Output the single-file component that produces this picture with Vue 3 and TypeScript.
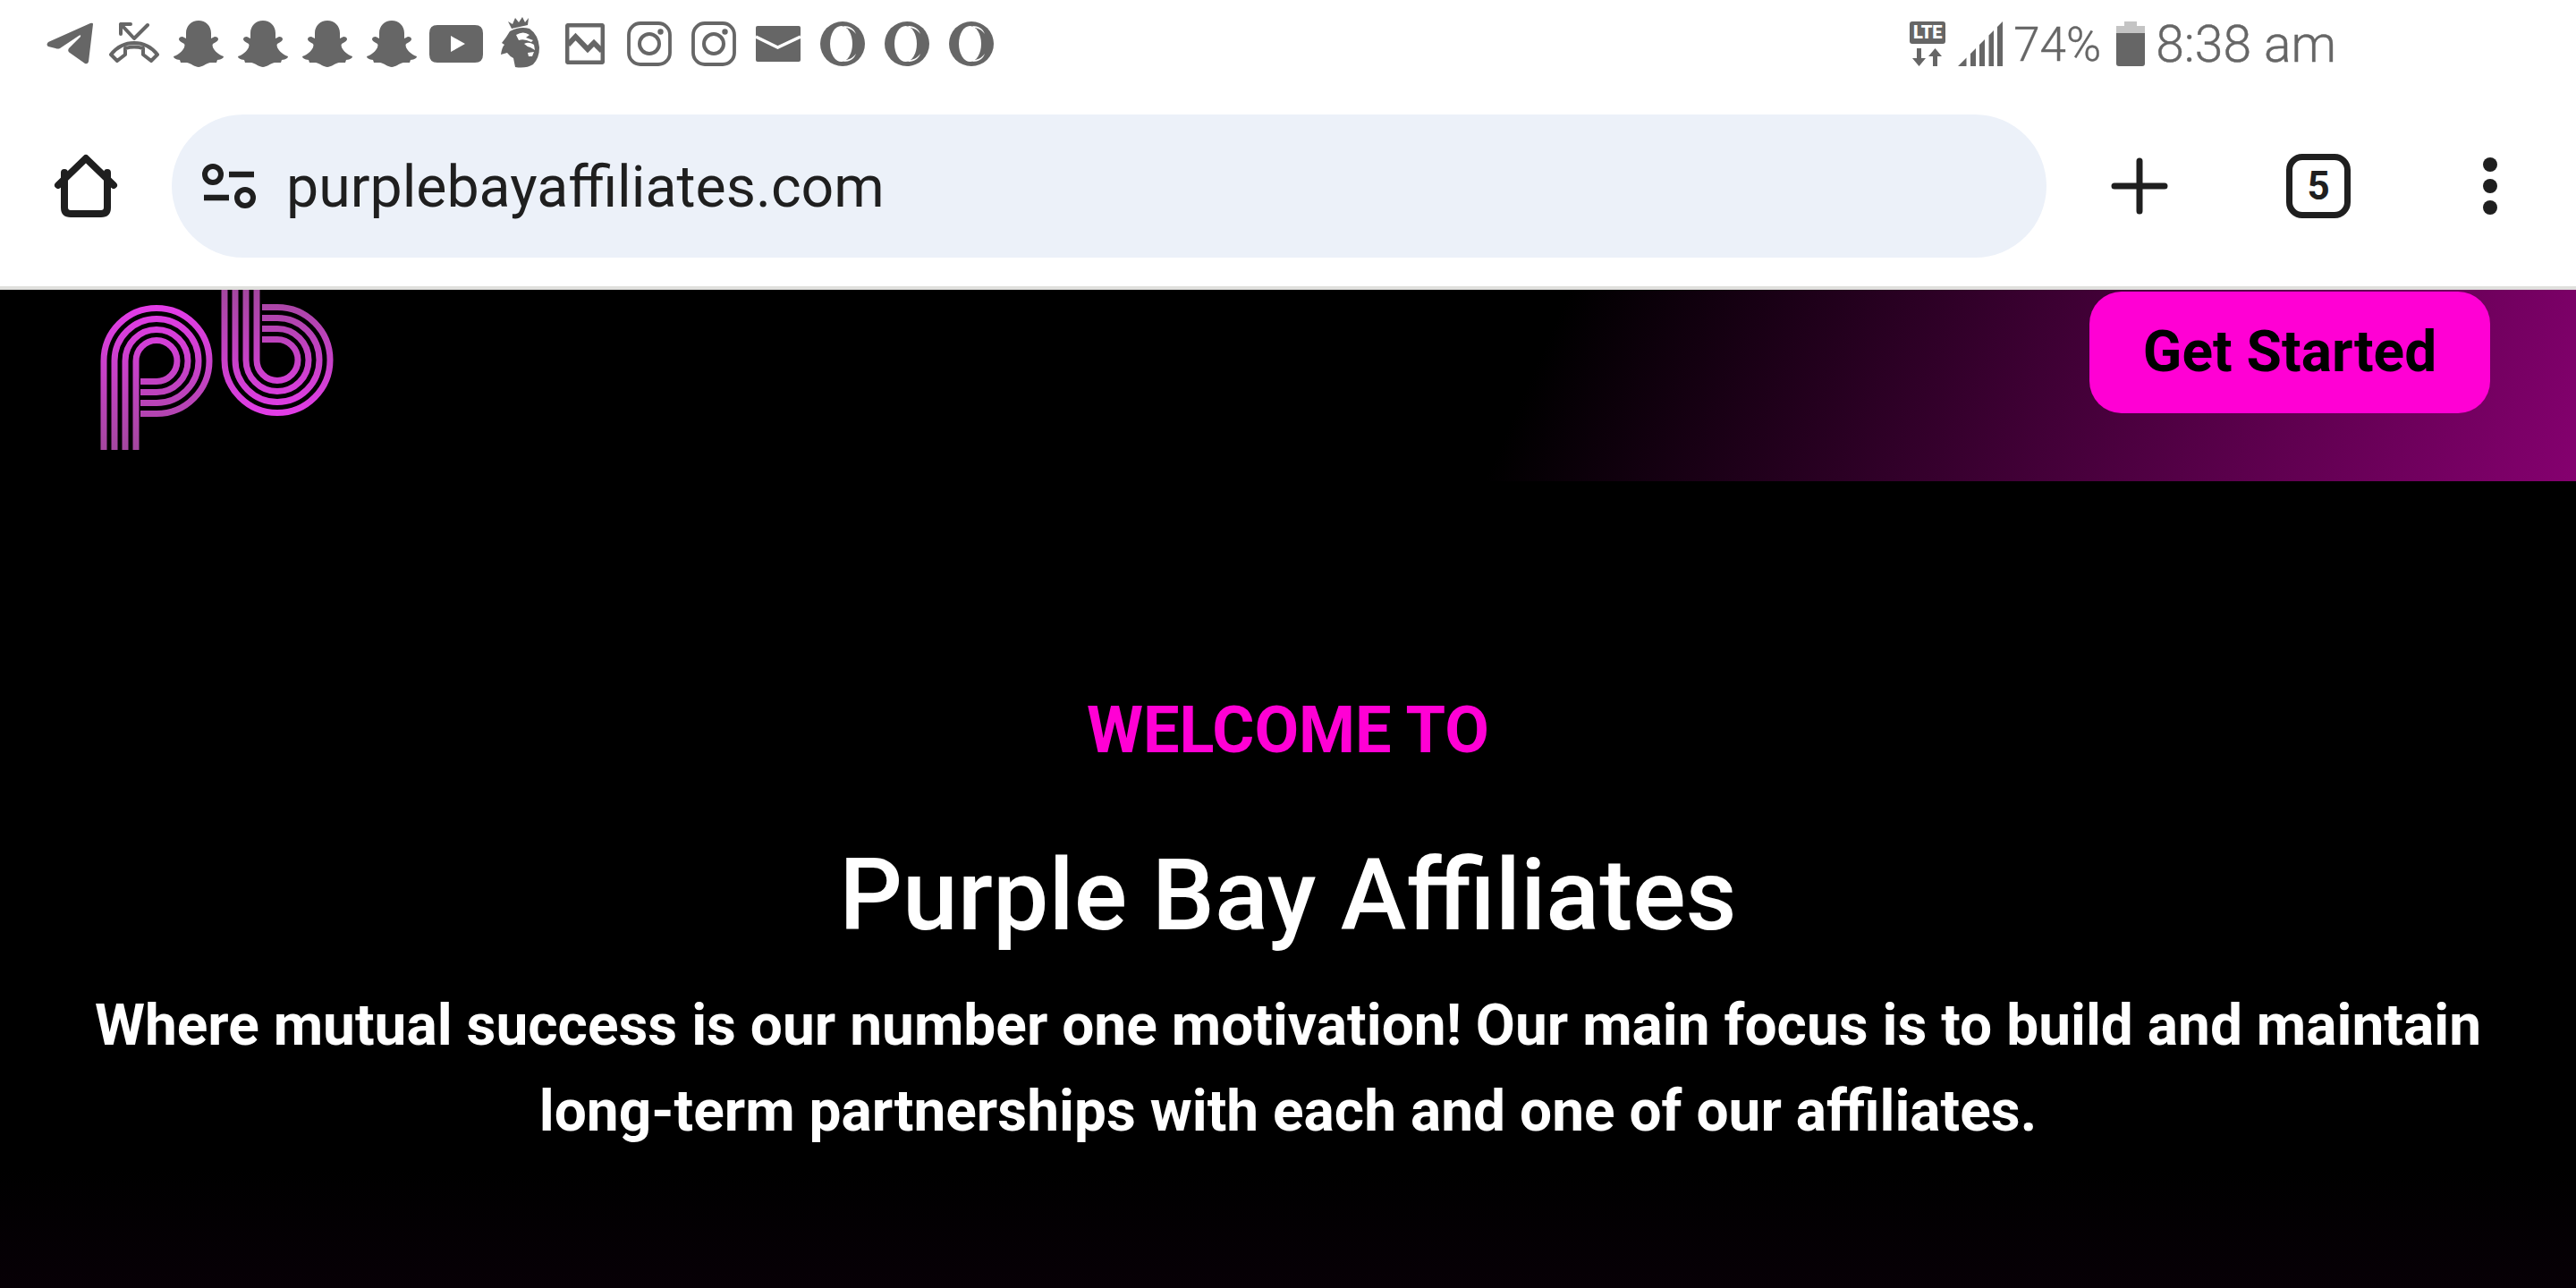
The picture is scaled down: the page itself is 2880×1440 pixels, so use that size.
<template>
  <div class="page">
    <!-- phone status bar -->
    <div class="status-bar">
      <div class="notif-icons">
        <div class="slot">
          <svg width="55" height="48" viewBox="0 0 55 48" fill="#666">
            <path d="M53 2 L48 44 Q47 47 44 46 L27 34 Q24 32 26 29 L39 16 Q40 13 37 15 L16 29 Q14 30 11 29 L3 27 Q0 25 3 22 L50 1 Q53 0 53 2Z" />
          </svg>
        </div>
        <div class="slot">
          <svg width="56" height="48" viewBox="0 0 56 48" fill="none" stroke="#666" stroke-width="4" stroke-linecap="round" stroke-linejoin="round">
            <path d="M13 13 V2 H24 M13 2 L28 18 L43 3" />
            <path d="M2 36 C10 26 18 23 28 23 C38 23 46 26 54 36 L47 43 L38 36 V29 Q28 26 18 29 V36 L9 43 Z" />
          </svg>
        </div>
        <div v-for="n in 4" :key="n" class="slot">
          <svg width="56" height="52" viewBox="0 0 56 52" fill="#666"><path :d="snapPath" /></svg>
        </div>
        <div class="slot">
          <svg width="60" height="42" viewBox="0 0 60 42" fill="#666">
            <path fill-rule="evenodd" d="M9 0 H51 Q60 0 60 9 V33 Q60 42 51 42 H9 Q0 42 0 33 V9 Q0 0 9 0Z M24 12 V30 L40 21Z" />
          </svg>
        </div>
        <div class="slot">
          <svg width="64" height="64" viewBox="0 2 64 64" fill="#666">
            <path d="M18 9 L23 12 L26 5 L30 10 L34 4 L37 10 L41 5 L40 13 L22 17Z" />
            <path d="M20 20 Q31 14 42 17 Q52 24 53 38 Q53 50 46 57 Q38 62 26 60 L24 50 Q20 48 17 44 L10 46 Q11 38 14 35 L11 33 Q16 27 20 20Z" />
            <path fill="#fff" d="M27 24 Q35 19 42 24 L38 27 L46 30 L44 32 Q36 28 30 30 Z M36 34 Q41 31 47 35 L48 41 L43 38 Q39 37 36 34Z M40 44 L47 43 L45 48 L41 48Z" />
          </svg>
        </div>
        <div class="slot">
          <svg width="44" height="46" viewBox="0 0 44 46" fill="none" stroke="#666" stroke-width="4.5" stroke-linejoin="round">
            <rect x="2.2" y="2.2" width="39.6" height="41.6" rx="1" />
            <path stroke-width="6" stroke-linejoin="miter" d="M3 24 L11.5 15 L25 29 L32 22 L41 31" />
          </svg>
        </div>
        <div v-for="n in 2" :key="n" class="slot">
          <svg width="50" height="50" viewBox="0 0 50 50" fill="none" stroke="#666">
            <rect x="2" y="2" width="46" height="46" rx="13" stroke-width="3.8" />
            <circle cx="25" cy="25" r="11" stroke-width="4" />
            <circle cx="37.5" cy="11.5" r="3.2" fill="#666" stroke="none" />
          </svg>
        </div>
        <div class="slot">
          <svg width="50" height="40" viewBox="0 0 50 40" fill="#666">
            <rect width="50" height="40" rx="2" />
            <path d="M0 12 L24.500 24 L50 12" fill="none" stroke="#fff" stroke-width="3.500" />
          </svg>
        </div>
        <div v-for="n in 3" :key="n" class="slot">
          <svg width="50" height="50" viewBox="0 0 50 50" fill="#666">
            <circle cx="25" cy="25" r="25" />
            <ellipse cx="23.500" cy="25" rx="12.500" ry="20" fill="#fff" />
            <path fill="#fff" d="M26 5 C33 5 38 8 40 14 C36 9 32 7 28 7Z M26 45 C33 45 38 42 40 36 C36 41 32 43 28 43Z" />
          </svg>
        </div>
      </div>

      <div class="sys-icons">
        <div class="net">
          <span class="lte">LTE</span>
          <svg width="40" height="20" viewBox="0 0 40 20" fill="#666">
            <path d="M8 0 H13 V11 H18 L10.500 20 L3 11 H8Z M26 20 H31 V9 H36 L28.500 0 L21 9 H26Z" />
          </svg>
        </div>
        <svg class="signal" width="50" height="50" viewBox="0 0 50 50" fill="#666">
          <path d="M0 50 L9.500 40.500 V50Z M14 50 V36 L20 30 V50Z M24 50 V26 L30 20 V50Z M34.500 50 V15.500 L40 10 V50Z M44 50 V6 L50 0 V50Z" />
        </svg>
        <span class="pct">74%</span>
        <svg class="battery" width="32" height="50" viewBox="0 0 32 50">
          <path fill="#c4c4c4" d="M9 0 H23 V5 H32 V14 H0 V5 H9Z" />
          <path fill="#666" d="M0 13 H32 V47 Q32 50 29 50 H3 Q0 50 0 47Z" />
        </svg>
        <span class="clock">8:38 am</span>
      </div>
    </div>

    <!-- browser toolbar -->
    <div class="toolbar">
      <svg class="home" width="72" height="72" viewBox="60 172 72 72" fill="none" stroke="#1f1f1f" stroke-width="8" stroke-linecap="round" stroke-linejoin="round">
        <path d="M65 207 L96 177 L127 207" />
        <path d="M72 193 V232 Q72 239 79 239 H113 Q120 239 120 232 V193" />
      </svg>
      <div class="address">
        <svg class="info" width="64" height="56" viewBox="226 180 64 56" fill="none" stroke="#1f1f1f">
          <circle cx="238" cy="195" r="9" stroke-width="6" />
          <circle cx="274" cy="221" r="9" stroke-width="6" />
          <path stroke-width="6.500" d="M256 195 H284 M228 221 H256" />
        </svg>
        <span class="url">purplebayaffiliates.com</span>
      </div>
      <svg class="plus" width="64" height="64" viewBox="0 0 64 64" fill="none" stroke="#1f1f1f" stroke-width="7" stroke-linecap="round">
        <path d="M32 4 V60 M4 32 H60" />
      </svg>
      <div class="tabs">5</div>
      <div class="dots"><i></i><i></i><i></i></div>
    </div>

    <!-- site -->
    <main class="site">
      <header class="site-header">
        <svg class="logo" width="270" height="179" viewBox="110 324 270 179" fill="none" stroke-width="7">
          <defs>
            <linearGradient id="pGrad" gradientUnits="userSpaceOnUse" x1="0" y1="342" x2="0" y2="503">
              <stop offset="0" stop-color="#e33ce8" />
              <stop offset="1" stop-color="#a4479f" />
            </linearGradient>
            <linearGradient id="bGrad" gradientUnits="userSpaceOnUse" x1="0" y1="324" x2="0" y2="465">
              <stop offset="0" stop-color="#a4479f" />
              <stop offset="1" stop-color="#e33ce8" />
            </linearGradient>
          </defs>
          <path v-for="r in radii" :key="'p' + r" stroke="url(#pGrad)" :d="pStroke(r)" />
          <path v-for="r in radii" :key="'b' + r" stroke="url(#bGrad)" :d="bStroke(r)" />
        </svg>
        <a class="cta">Get Started</a>
      </header>

      <section class="hero">
        <h3 class="kicker">WELCOME TO</h3>
        <h1 class="title">Purple Bay Affiliates</h1>
        <p class="lead">
          Where mutual success is our number one motivation! Our main focus is to build and maintain
          long-term partnerships with each and one of our affiliates.
        </p>
      </section>
    </main>
  </div>
</template>

<script setup lang="ts">
const snapPath =
  'M28 0 C36 0 42 6 42 14 V20 L46 18 Q50 18 50 21 Q50 23 44 26 Q43 27 44 30 C46 34 50 38 56 40 Q56 43 49 44 L48 47 L41 47 C36 48 32 52 28 52 C24 52 20 48 15 47 L8 47 L7 44 Q0 43 0 40 C6 38 10 34 12 30 Q13 27 12 26 Q6 23 6 21 Q6 18 10 18 L14 20 V14 C14 6 20 0 28 0Z'

// the logo is four concentric lines per letter
const radii = [59, 47, 35, 23]

const pStroke = (r: number) => {
  const cx = 175
  const cy = 403.5
  return `M${cx - r} 503 V${cy} A${r} ${r} 0 1 1 ${cx} ${cy + r} H157`
}

const bStroke = (r: number) => {
  const cx = 310
  const cy = 402.5
  return `M${cx - r} 324 V${cy} A${r} ${r} 0 1 0 ${cx} ${cy - r} H293`
}
</script>

<style scoped>
.page {
  width: 2880px;
  height: 1440px;
  overflow: hidden;
  display: flex;
  flex-direction: column;
  background: #fff;
  font-family: Roboto, "Liberation Sans", sans-serif;
}

.status-bar {
  height: 96px;
  padding: 2px 268px 0 42px;
  box-sizing: border-box;
  display: flex;
  align-items: center;
  justify-content: space-between;
  color: #666;
}

.notif-icons {
  display: flex;
}

.slot {
  width: 72px;
  display: flex;
  justify-content: center;
  align-items: center;
}

.sys-icons {
  display: flex;
  align-items: center;
}

.net {
  width: 40px;
  display: flex;
  flex-direction: column;
  gap: 5px;
}

.lte {
  height: 25px;
  border-radius: 3px;
  background: #666;
  color: #fff;
  font-size: 20px;
  font-weight: 900;
  line-height: 25px;
  text-align: center;
}

.signal {
  margin-left: 14px;
}

.pct {
  margin: 2px 0 0 12px;
  font-size: 53px;
  font-weight: 300;
  line-height: 50px;
  -webkit-text-stroke: 0.4px #666;
}

.battery {
  margin-left: 17px;
}

.clock {
  margin: 2px 0 0 12px;
  font-size: 57px;
  font-weight: 300;
  line-height: 50px;
  -webkit-text-stroke: 0.4px #666;
}

.toolbar {
  height: 224px;
  border-bottom: 4px solid #e0e0dd;
  display: flex;
  align-items: center;
  background: #fff;
  color: #1f1f1f;
}

.home {
  margin-left: 60px;
}

.address {
  width: 2096px;
  height: 160px;
  margin-left: 60px;
  border-radius: 80px;
  background: #ecf1f9;
  display: flex;
  align-items: center;
}

.info {
  margin-left: 34px;
}

.url {
  margin: 2px 0 0 30px;
  font-size: 64.4px;
}

.plus {
  margin-left: 72px;
}

.tabs {
  width: 72px;
  height: 72px;
  margin-left: 132px;
  box-sizing: border-box;
  border: 7px solid #1f1f1f;
  border-radius: 18px;
  font-size: 44px;
  font-weight: 700;
  line-height: 58px;
  text-align: center;
}

.dots {
  margin-left: 148px;
  display: flex;
  flex-direction: column;
  gap: 8px;
}

.dots i {
  width: 16px;
  height: 16px;
  border-radius: 50%;
  background: #1f1f1f;
}

.site {
  flex: 1;
  background: linear-gradient(180deg, #000 88%, #070006 100%);
  color: #fff;
}

.site-header {
  height: 214px;
  padding: 2px 96px 0 110px;
  box-sizing: border-box;
  display: flex;
  justify-content: space-between;
  align-items: flex-start;
  background: linear-gradient(114deg, #000 59%, #85006f 100%);
}

.logo {
  margin-top: -2px;
}

.cta {
  width: 448px;
  height: 136px;
  border-radius: 36px;
  background: #ff00d4;
  color: #000;
  font-size: 64px;
  font-weight: 700;
  line-height: 136px;
  text-align: center;
}

.hero {
  padding-top: 234px;
  text-align: center;
}

.kicker {
  margin: 0;
  color: #ff00d4;
  font-size: 72px;
  font-weight: 700;
  line-height: 90px;
}

.title {
  margin: 79px 0 0;
  font-size: 111px;
  font-weight: 500;
  line-height: 120px;
}

.lead {
  width: 2720px;
  margin: 38px auto 0;
  font-size: 64px;
  font-weight: 700;
  line-height: 96px;
}
</style>
